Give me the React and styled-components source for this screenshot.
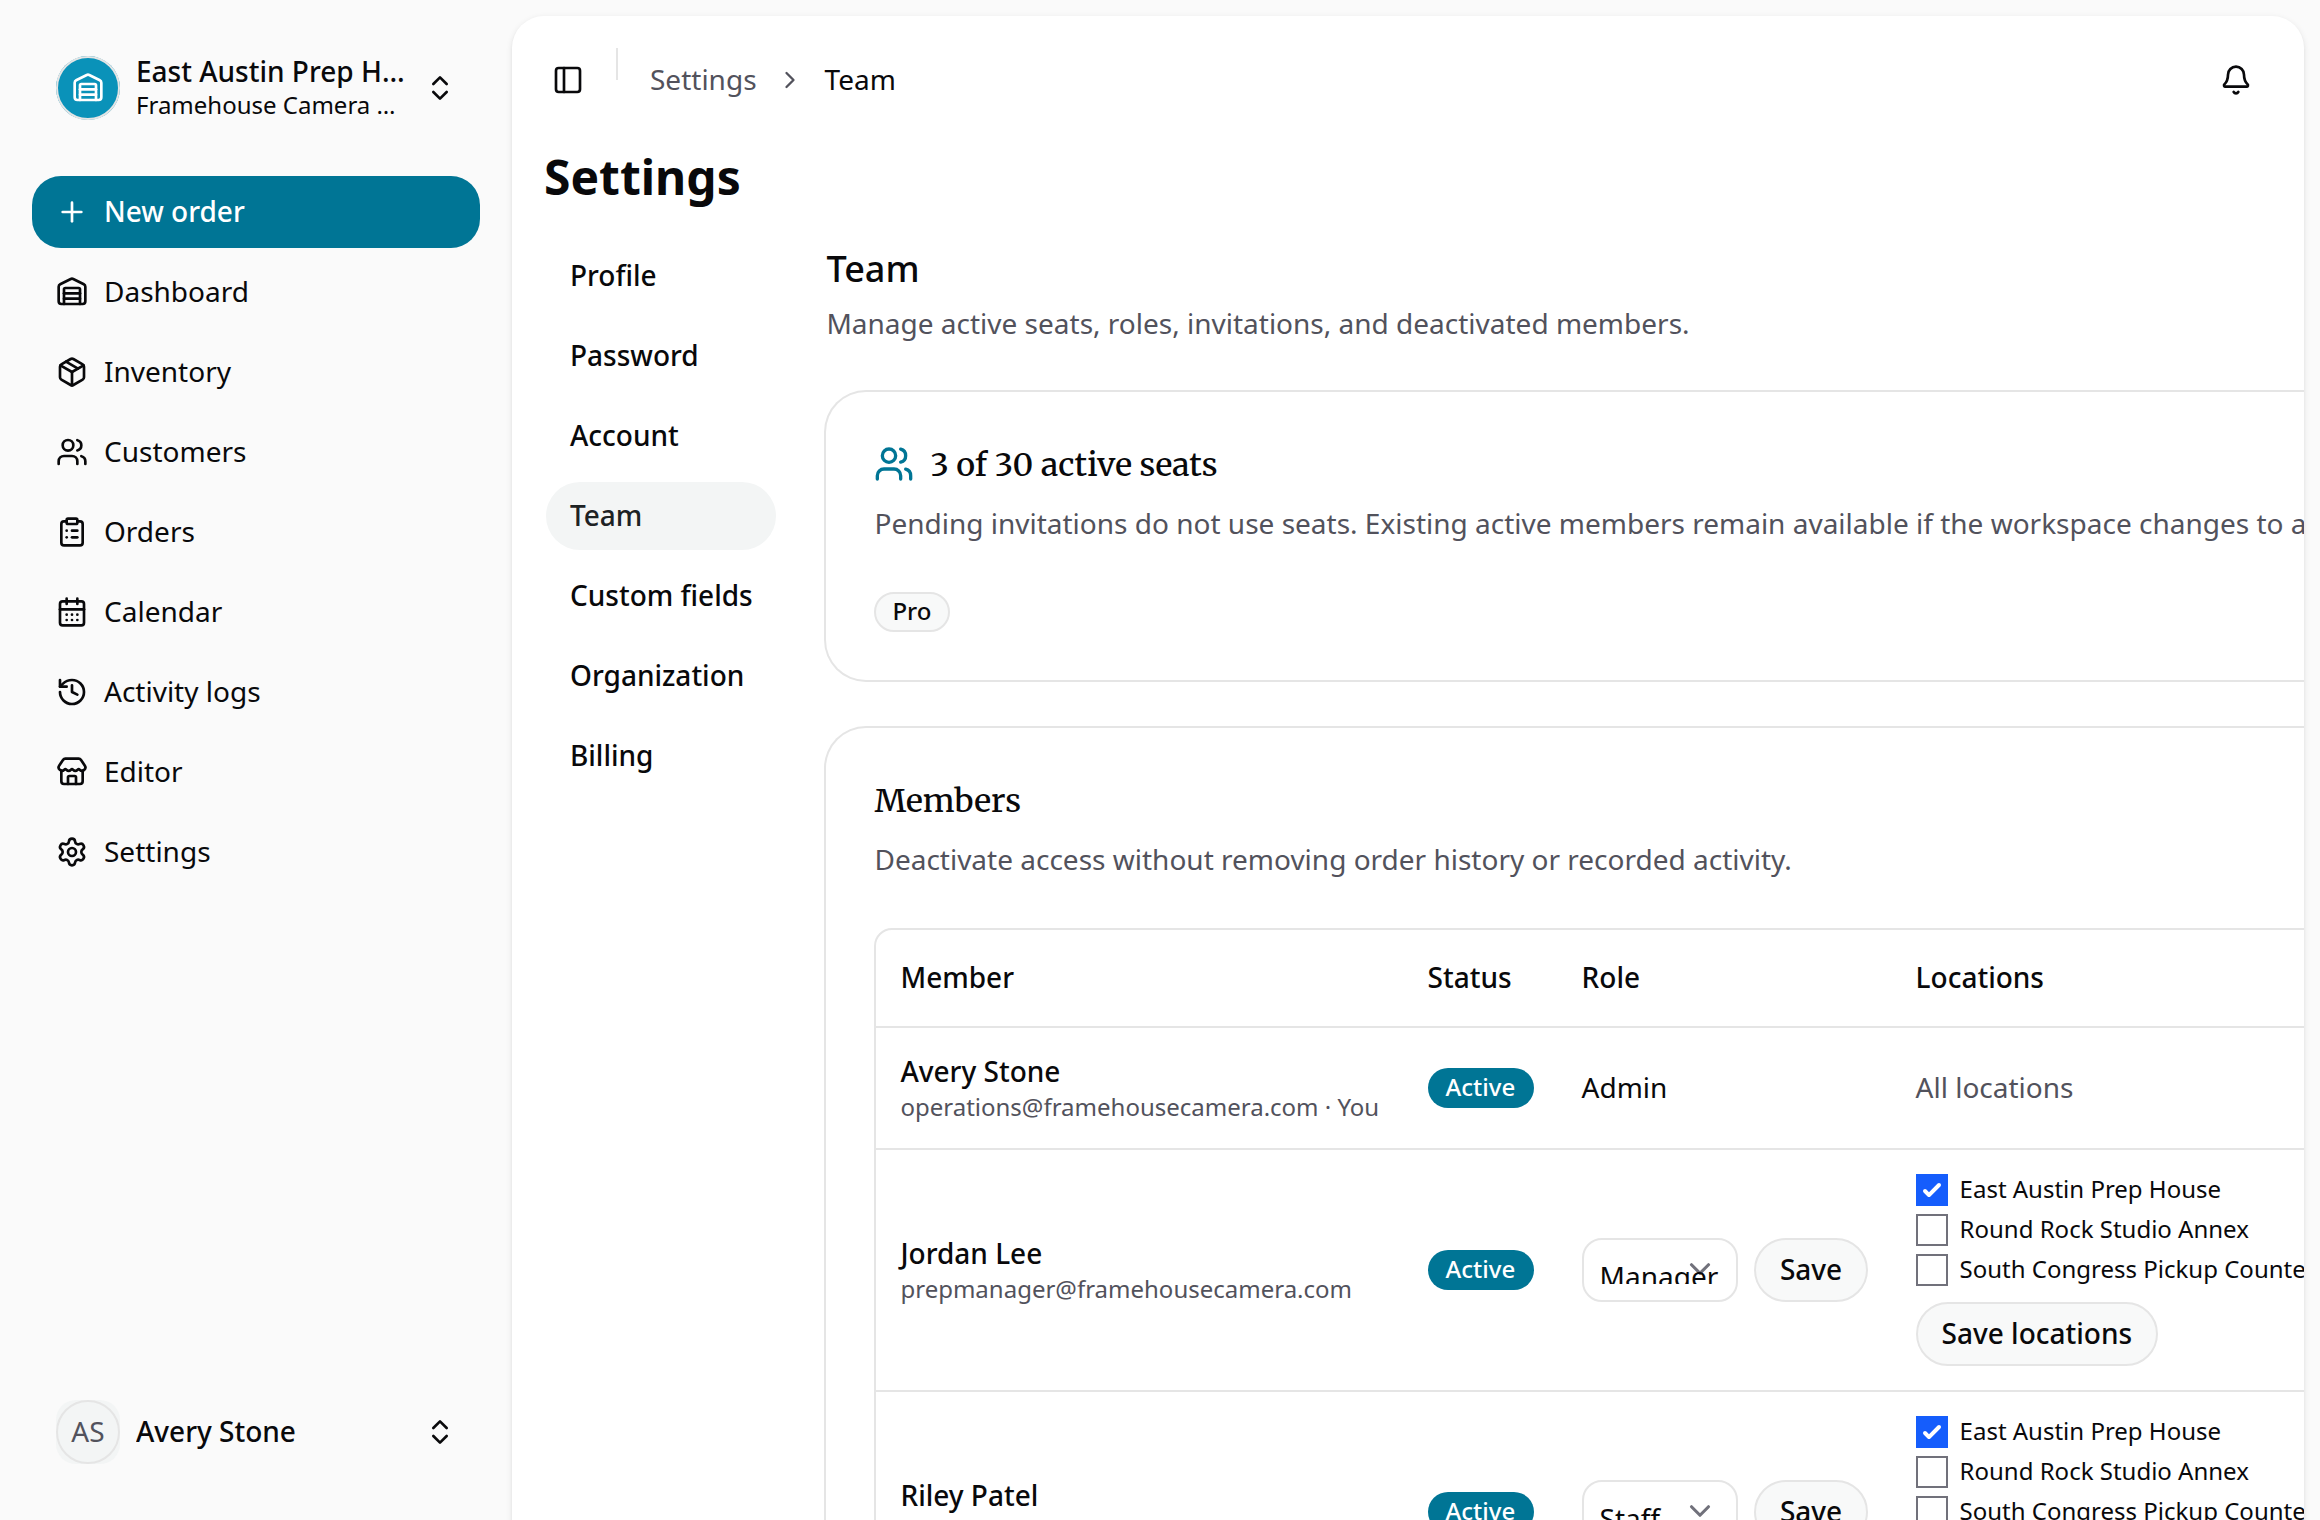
import React from "react";
import styled, { createGlobalStyle, css } from "styled-components";
import {
  Warehouse,
  ChevronsUpDown,
  Plus,
  Package,
  Users,
  ClipboardList,
  CalendarDays,
  History,
  Store,
  Settings as SettingsIcon,
  PanelLeft,
  ChevronRight,
  ChevronDown,
  Bell,
} from "lucide-react";

const c = {
  bg: "#fafafa",
  panel: "#ffffff",
  text: "#09090b",
  muted: "#52525c",
  border: "#e5e5e5",
  primary: "#007595",
  brand: "#0a92b9",
  soft: "#f3f5f5",
  button: "#f8f9f9",
  blue: "#155dfc",
};

const GlobalStyle = createGlobalStyle`
  *, *::before, *::after { box-sizing: border-box; }
  html, body { margin: 0; padding: 0; background: ${c.bg}; overflow: hidden; }
  body {
    font-family: "Noto Sans", "Liberation Sans", sans-serif;
    font-size: 28px;
    line-height: 40px;
    color: ${c.text};
  }
  h1, h2, h3, p { margin: 0; }
  button { font: inherit; color: inherit; border: 0; background: none; padding: 0; }
  svg { flex: none; display: block; }
`;

const Shell = styled.div`
  display: flex;
  width: 2320px;
  height: 1520px;
  overflow: hidden;
`;

const Sidebar = styled.aside`
  width: 512px;
  flex: none;
  display: flex;
  flex-direction: column;
  justify-content: space-between;
  padding: 40px 32px;
`;

const Switcher = styled.button`
  display: flex;
  align-items: center;
  gap: 16px;
  width: 100%;
  height: 96px;
  padding: 0 24px;
  text-align: left;
`;

const Avatar = styled.span`
  position: relative;
  flex: none;
  display: flex;
  align-items: center;
  justify-content: center;
  width: 64px;
  height: 64px;
  padding-bottom: ${(p) => (p.$brand ? 0 : 2)}px;
  border-radius: ${(p) => (p.$brand ? "32px" : "20px")};
  background: ${(p) => (p.$brand ? c.brand : c.soft)};
  color: ${(p) => (p.$brand ? "#fff" : c.muted)};
  line-height: 38px;

  &::after {
    content: "";
    position: absolute;
    inset: 0;
    border: 2px solid ${c.border};
    border-radius: 50%;
  }
`;

const SwitcherText = styled.span`
  flex: 1;
  min-width: 0;
  display: flex;
  flex-direction: column;
  padding-bottom: ${(p) => (p.$single ? 2 : 1)}px;
`;

const Truncate = styled.span`
  overflow: hidden;
  white-space: nowrap;
  text-overflow: ellipsis;
  font-size: ${(p) => (p.$small ? 24 : 28)}px;
  line-height: ${(p) => (p.$small ? 33 : p.$single ? 38 : 34)}px;
  font-weight: ${(p) => (p.$small ? 400 : 500)};
`;

const Nav = styled.nav`
  display: flex;
  flex-direction: column;
  gap: 8px;
  margin-top: 40px;
`;

const NavItem = styled.a`
  display: flex;
  align-items: center;
  gap: 16px;
  height: 72px;
  padding: 0 24px;
  border-radius: 29px;
  ${(p) =>
    p.$primary &&
    css`
      background: ${c.primary};
      color: #fff;
      font-weight: 500;
    `}
  span {
    line-height: 38px;
    padding-bottom: 2px;
  }
`;

const Main = styled.main`
  flex: none;
  width: 1792px;
  height: 1560px;
  margin-top: 16px;
  border-radius: 32px;
  background: ${c.panel};
  box-shadow: 0 2px 6px rgba(0, 0, 0, 0.1), 0 2px 4px -2px rgba(0, 0, 0, 0.1);
  overflow: hidden;
`;

const TopBar = styled.header`
  display: flex;
  align-items: center;
  justify-content: space-between;
  height: 128px;
  padding: 0 32px 0 24px;
`;

const TopLeft = styled.div`
  display: flex;
  align-items: center;
  gap: 16px;
`;

const IconButton = styled.button`
  display: flex;
  align-items: center;
  justify-content: center;
  width: ${(p) => p.$size}px;
  height: ${(p) => p.$size}px;
`;

const Separator = styled.span`
  align-self: flex-start;
  width: 2px;
  height: 32px;
  margin-right: 16px;
  background: ${c.border};
`;

const Crumbs = styled.div`
  display: flex;
  align-items: center;
  gap: 20px;
  color: ${c.muted};
  span {
    line-height: 38px;
    padding-bottom: 2px;
  }
  span:last-child {
    color: ${c.text};
  }
  svg {
    margin: 0 1px 0 -1px;
  }
`;

const Page = styled.div`
  padding: 0 32px;
`;

const PageTitle = styled.h1`
  height: 64px;
  padding-top: 1px;
  font-size: 48px;
  line-height: 64px;
  font-weight: 700;
`;

const Columns = styled.div`
  display: flex;
  align-items: flex-start;
  gap: 48px;
  margin-top: 32px;
`;

const SubNav = styled.nav`
  flex: none;
  display: flex;
  flex-direction: column;
  gap: 8px;
  width: 234.45px;
`;

const SubNavItem = styled.a`
  display: flex;
  align-items: center;
  height: 72px;
  padding: 0 24px 2px;
  border: 2px solid transparent;
  border-radius: 36px;
  background-clip: padding-box;
  white-space: nowrap;
  font-weight: 500;
  ${(p) =>
    p.$active &&
    css`
      background-color: ${c.soft};
      color: #1d2224;
    `}
`;

const Content = styled.section`
  flex: none;
  width: 1790px;
`;

const SectionTitle = styled.h2`
  height: 64px;
  padding-top: 1px;
  font-size: 36px;
  line-height: 56px;
  font-weight: 500;
`;

const Muted = styled.p`
  height: 40px;
  line-height: 38px;
  color: ${c.muted};
  white-space: nowrap;
`;

const Intro = styled.div`
  height: 152px;
`;

const Card = styled.article`
  padding: 48px;
  margin-bottom: 48px;
  border-radius: 40px;
  box-shadow: 0 0 0 2px ${c.border};
`;

const CardTitle = styled.h3`
  display: flex;
  align-items: center;
  gap: 16px;
  height: 48px;
  margin-bottom: 16px;
  font-family: Merriweather, "Noto Serif", "DejaVu Serif Condensed", "DejaVu Serif", serif;
  font-size: 32px;
  line-height: 46px;
  font-weight: 500;
  svg {
    color: ${c.primary};
  }
  span {
    padding-top: 2px;
  }
`;

const Badge = styled.span`
  display: inline-flex;
  align-items: center;
  height: 40px;
  min-width: ${(p) => (p.$active ? 106 : 76)}px;
  padding: 0 16px 2px;
  border: 2px solid ${(p) => (p.$active ? "transparent" : c.border)};
  border-radius: 20px;
  background: ${(p) => (p.$active ? c.primary : c.button)};
  background-origin: border-box;
  color: ${(p) => (p.$active ? "#fff" : c.text)};
  font-size: 24px;
  line-height: 32px;
  font-weight: 500;
`;

const BadgeRow = styled.div`
  display: flex;
  margin-top: 48px;
`;

const Table = styled.div`
  margin-top: 48px;
  border: 2px solid ${c.border};
  border-radius: 18px;
`;

const Row = styled.div`
  display: grid;
  grid-template-columns: 527.15px 154px 334px 1fr;
  align-items: center;
  height: ${(p) => p.$height}px;
  border-bottom: 2px solid ${c.border};
  font-weight: ${(p) => (p.$head ? 500 : 400)};
`;

const Cell = styled.div`
  display: flex;
  align-items: center;
  gap: 16px;
  padding: 0 24px;
  color: ${(p) => (p.$muted ? c.muted : "inherit")};
  white-space: nowrap;
`;

const Label = styled.span`
  line-height: 38px;
  padding-bottom: 2px;
`;

const Person = styled.div`
  display: flex;
  flex-direction: column;
  height: 72px;
  strong {
    font-weight: 500;
    line-height: 38px;
    height: 40px;
  }
  span {
    font-size: 24px;
    line-height: 29px;
    color: ${c.muted};
  }
`;

const Select = styled.div`
  position: relative;
  flex: none;
  width: 156.3px;
  height: 64px;
  padding: 16px;
  border: 2px solid ${c.border};
  border-radius: 20px;
  svg {
    position: absolute;
    right: 19px;
    top: 12px;
    color: #71717b;
  }
`;

const SelectValue = styled.div`
  position: relative;
  height: 28px;
  overflow: hidden;
  line-height: 40px;
`;

const OutlineButton = styled.button`
  align-self: flex-start;
  height: 64px;
  padding: 0 24px 2px;
  border: 2px solid ${c.border};
  border-radius: 32px;
  background: ${c.button};
  font-weight: 500;
  line-height: 40px;
`;

const Locations = styled.div`
  display: flex;
  flex-direction: column;
  gap: 8px;
`;

const Option = styled.label`
  display: flex;
  align-items: center;
  gap: 12px;
  height: 32px;
  font-size: 24px;
  span:last-child {
    line-height: 30px;
    padding-bottom: 2px;
  }
`;

const Box = styled.span`
  display: flex;
  align-items: center;
  justify-content: center;
  width: 32px;
  height: 32px;
  border: 2px solid ${(p) => (p.$on ? c.blue : "#71717b")};
  background: ${(p) => (p.$on ? c.blue : "#fff")};
`;

const ButtonSlot = styled.div`
  display: flex;
  margin-top: 8px;
`;

const nav = [
  ["Dashboard", Warehouse],
  ["Inventory", Package],
  ["Customers", Users],
  ["Orders", ClipboardList],
  ["Calendar", CalendarDays],
  ["Activity logs", History],
  ["Editor", Store],
  ["Settings", SettingsIcon],
];

const subnav = ["Profile", "Password", "Account", "Team", "Custom fields", "Organization", "Billing"];

const places = ["East Austin Prep House", "Round Rock Studio Annex", "South Congress Pickup Counter"];

const members = [
  { name: "Jordan Lee", email: "prepmanager@framehousecamera.com", role: "Manager" },
  { name: "Riley Patel", email: "staff@framehousecamera.com", role: "Staff" },
];

const Tick = () => (
  <svg width="32" height="32" viewBox="0 0 16 16" fill="#fff">
    <path d="M12.207 4.793a1 1 0 0 1 0 1.414l-5 5a1 1 0 0 1-1.414 0l-2-2a1 1 0 0 1 1.414-1.414L6.5 9.086l4.293-4.293a1 1 0 0 1 1.414 0z" />
  </svg>
);

const MemberRow = ({ name, email, role }) => (
  <Row $height={242}>
    <Cell>
      <Person>
        <strong>{name}</strong>
        <span>{email}</span>
      </Person>
    </Cell>
    <Cell>
      <Badge $active>Active</Badge>
    </Cell>
    <Cell>
      <Select>
        <ChevronDown size={34} strokeWidth={2.2} />
        <SelectValue>{role}</SelectValue>
      </Select>
      <OutlineButton>Save</OutlineButton>
    </Cell>
    <Cell>
      <Locations>
        {places.map((place, i) => (
          <Option key={place}>
            <Box $on={i === 0}>{i === 0 && <Tick />}</Box>
            <span>{place}</span>
          </Option>
        ))}
        <ButtonSlot>
          <OutlineButton>Save locations</OutlineButton>
        </ButtonSlot>
      </Locations>
    </Cell>
  </Row>
);

export default function App() {
  return (
    <>
      <GlobalStyle />
      <Shell>
        <Sidebar>
          <div>
            <Switcher>
              <Avatar $brand>
                <Warehouse size={32} />
              </Avatar>
              <SwitcherText>
                <Truncate>East Austin Prep House</Truncate>
                <Truncate $small>Framehouse Camera Rentals</Truncate>
              </SwitcherText>
              <ChevronsUpDown size={32} />
            </Switcher>
            <Nav>
              <NavItem $primary>
                <Plus size={32} />
                <span>New order</span>
              </NavItem>
              {nav.map(([label, Icon]) => (
                <NavItem key={label}>
                  <Icon size={32} />
                  <span>{label}</span>
                </NavItem>
              ))}
            </Nav>
          </div>
          <Switcher>
            <Avatar>AS</Avatar>
            <SwitcherText $single>
              <Truncate $single>Avery Stone</Truncate>
            </SwitcherText>
            <ChevronsUpDown size={32} />
          </Switcher>
        </Sidebar>
        <Main>
          <TopBar>
            <TopLeft>
              <IconButton $size={64}>
                <PanelLeft size={32} />
              </IconButton>
              <Separator />
              <Crumbs>
                <span>Settings</span>
                <ChevronRight size={28} />
                <span>Team</span>
              </Crumbs>
            </TopLeft>
            <IconButton $size={72}>
              <Bell size={32} />
            </IconButton>
          </TopBar>
          <Page>
            <PageTitle>Settings</PageTitle>
            <Columns>
              <SubNav>
                {subnav.map((label) => (
                  <SubNavItem key={label} $active={label === "Team"}>
                    {label}
                  </SubNavItem>
                ))}
              </SubNav>
              <Content>
                <Intro>
                  <SectionTitle>Team</SectionTitle>
                  <Muted>Manage active seats, roles, invitations, and deactivated members.</Muted>
                </Intro>
                <Card>
                  <CardTitle>
                    <Users size={40} />
                    <span>3 of 30 active seats</span>
                  </CardTitle>
                  <Muted>
                    Pending invitations do not use seats. Existing active members remain available if the workspace
                    changes to a smaller plan.
                  </Muted>
                  <BadgeRow>
                    <Badge>Pro</Badge>
                  </BadgeRow>
                </Card>
                <Card>
                  <CardTitle>
                    <span>Members</span>
                  </CardTitle>
                  <Muted>Deactivate access without removing order history or recorded activity.</Muted>
                  <Table>
                    <Row $head $height={98}>
                      {["Member", "Status", "Role", "Locations"].map((label) => (
                        <Cell key={label}>
                          <Label>{label}</Label>
                        </Cell>
                      ))}
                    </Row>
                    <Row $height={122}>
                      <Cell>
                        <Person>
                          <strong>Avery Stone</strong>
                          <span>operations@framehousecamera.com · You</span>
                        </Person>
                      </Cell>
                      <Cell>
                        <Badge $active>Active</Badge>
                      </Cell>
                      <Cell>
                        <Label>Admin</Label>
                      </Cell>
                      <Cell $muted>
                        <Label>All locations</Label>
                      </Cell>
                    </Row>
                    {members.map((m) => (
                      <MemberRow key={m.name} {...m} />
                    ))}
                  </Table>
                </Card>
              </Content>
            </Columns>
          </Page>
        </Main>
      </Shell>
    </>
  );
}
